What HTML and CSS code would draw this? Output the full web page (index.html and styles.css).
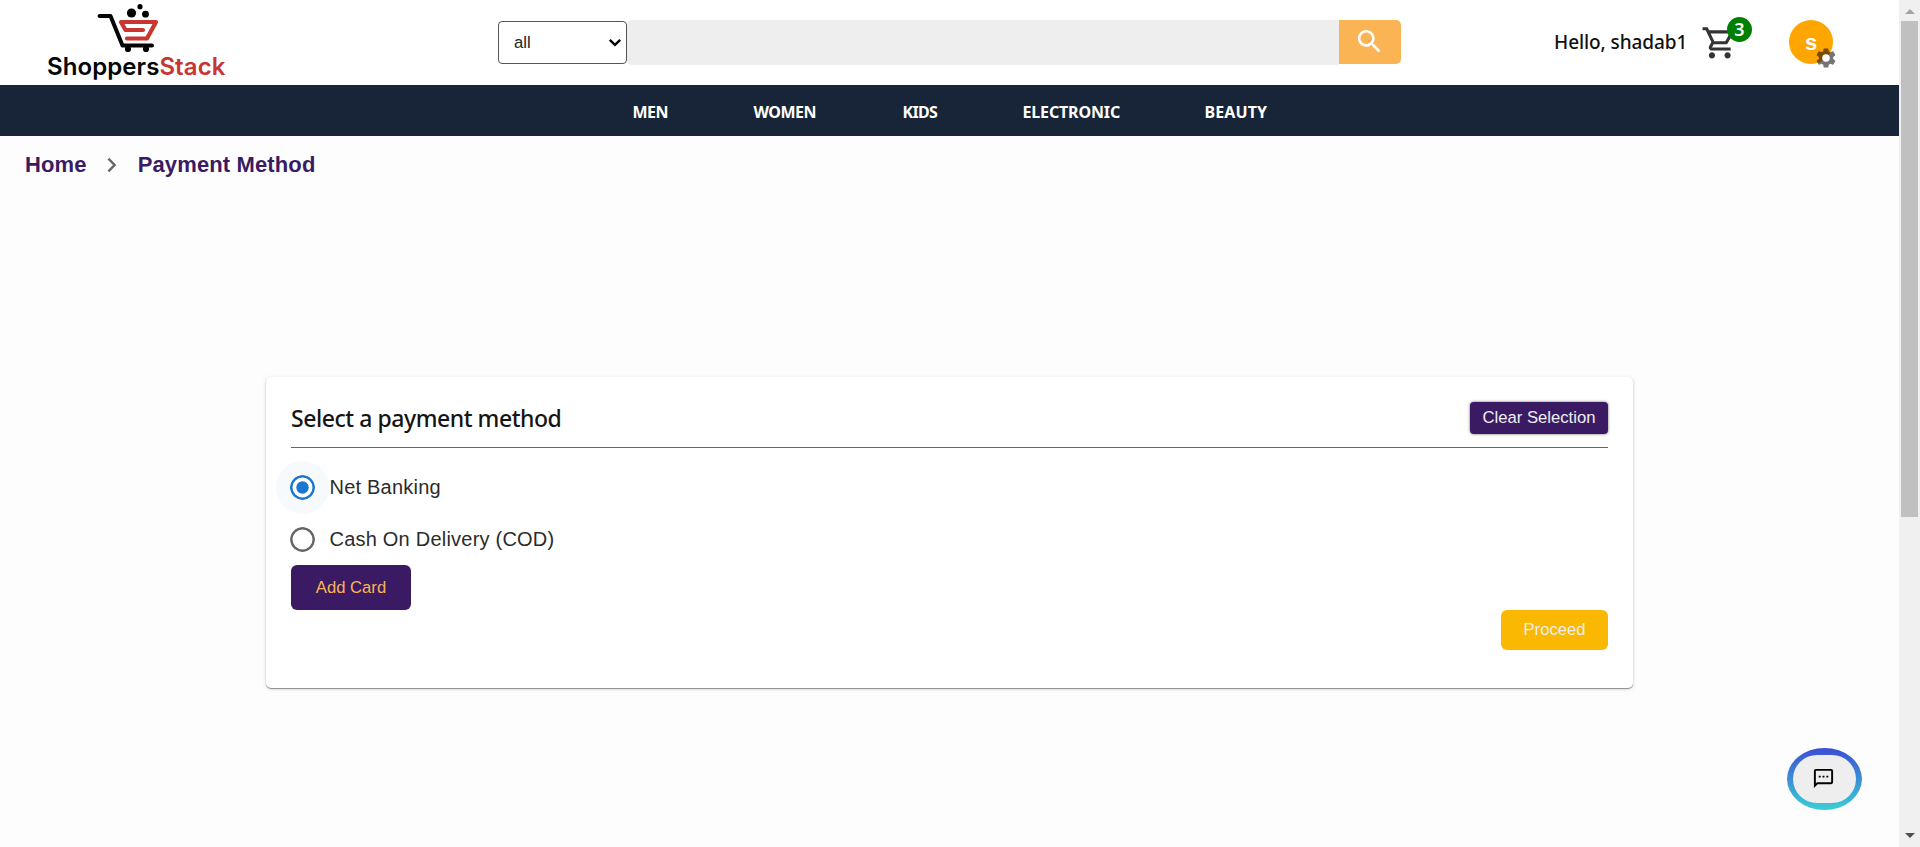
FILE: index.html
```html
<!DOCTYPE html>
<html lang="en">
<head>
<meta charset="utf-8">
<title>ShoppersStack</title>
<link rel="stylesheet" href="styles.css">
</head>
<body>
<div class="window">
  <div class="page">
    <header class="header">
      <div class="logo">
        <svg class="logo-mark" width="62" height="50" viewBox="0 0 62 50">
          <g fill="none" stroke-linecap="round" stroke-linejoin="round">
            <path d="M2.5 12H13.5L25.5 41.5H55" stroke="#050505" stroke-width="4"/>
            <path d="M46 26H28.5L24 18H59L50 34.500H30" stroke="#c83632" stroke-width="4.200"/>
          </g>
          <circle cx="34.500" cy="9" r="4.6"/><circle cx="43" cy="2.7" r="2.6"/><circle cx="48.500" cy="10.2" r="3.4"/>
          <circle cx="31" cy="45" r="3.1"/><circle cx="49" cy="45" r="3.1"/>
        </svg>
        <div class="logo-name">Shoppers<span class="logo-accent">Stack</span></div>
      </div>
      <div class="search">
        <div class="category">all
          <svg width="14" height="9" viewBox="0 0 14 9"><path d="M1.8 1.8L7 6.8L12.2 1.8" fill="none" stroke="#000" stroke-width="2.4"/></svg>
        </div>
        <div class="field"></div>
        <div class="search-button">
          <svg width="31" height="31" viewBox="0 0 24 24" fill="#fff"><path d="M15.5 14h-.79l-.28-.27C15.41 12.59 16 11.11 16 9.5 16 5.91 13.09 3 9.5 3S3 5.91 3 9.5 5.91 16 9.5 16c1.61 0 3.09-.59 4.23-1.57l.27.28v.79l5 4.99L20.49 19l-4.99-5zm-6 0C7.01 14 5 11.99 5 9.5S7.01 5 9.5 5 14 7.01 14 9.5 11.99 14 9.5 14z"/></svg>
        </div>
      </div>
      <div class="greeting">Hello, shadab1</div>
      <div class="cart">
        <svg width="37.5" height="37.5" viewBox="0 0 24 24" fill="#333"><path d="M15.55 13c.75 0 1.41-.41 1.75-1.03l3.58-6.49c.37-.66-.11-1.48-.87-1.48H5.21l-.94-2H1v2h2l3.6 7.59-1.35 2.44C4.52 15.37 5.48 17 7 17h12v-2H7l1.1-2h7.45zM6.16 6h12.15l-2.76 5H8.53L6.16 6zM7 18c-1.1 0-1.99.9-1.99 2S5.9 22 7 22s2-.9 2-2-.9-2-2-2zm10 0c-1.1 0-1.99.9-1.99 2s.89 2 1.99 2 2-.9 2-2-.9-2-2-2z"/></svg>
        <span class="badge">3</span>
      </div>
      <div class="avatar">s
        <svg class="gear" width="24" height="24" viewBox="0 0 24 24"><path d="M19.14 12.94c.04-.3.06-.61.06-.94 0-.32-.02-.64-.07-.94l2.03-1.58c.18-.14.23-.41.12-.61l-1.92-3.32c-.12-.22-.37-.29-.59-.22l-2.39.96c-.5-.38-1.03-.7-1.62-.94l-.36-2.54c-.04-.24-.24-.41-.48-.41h-3.84c-.24 0-.43.17-.47.41l-.36 2.54c-.59.24-1.13.57-1.62.94l-2.39-.96c-.22-.08-.47 0-.59.22L2.74 8.87c-.12.21-.08.47.12.61l2.03 1.58c-.05.3-.09.63-.09.94s.02.64.07.94l-2.03 1.58c-.18.14-.23.41-.12.61l1.92 3.32c.12.22.37.29.59.22l2.39-.96c.5.38 1.03.7 1.62.94l.36 2.54c.05.24.24.41.48.41h3.84c.24 0 .44-.17.47-.41l.36-2.54c.59-.24 1.13-.56 1.62-.94l2.39.96c.22.08.47 0 .59-.22l1.92-3.32c.12-.22.07-.47-.12-.61l-2.01-1.58z"/><circle class="gear-hole" cx="12" cy="12" r="3.8"/></svg>
      </div>
    </header>
    <nav class="nav"><span class="n-men">MEN</span><span class="n-women">WOMEN</span><span class="n-kids">KIDS</span><span class="n-electronic">ELECTRONIC</span><span class="n-beauty">BEAUTY</span></nav>
    <div class="crumbs">
      <span>Home</span>
      <svg width="10" height="16" viewBox="0 0 10 16"><path d="M1.4 1.6L7.6 8L1.4 14.4" fill="none" stroke="#666" stroke-width="2.4"/></svg>
      <span>Payment Method</span>
    </div>
    <main class="card">
      <div class="card-head">
        <h1 class="title">Select a payment method</h1>
        <button class="clear">Clear Selection</button>
      </div>
      <div class="option">
        <svg class="radio radio-on" width="25" height="25" viewBox="0 0 25 25"><circle class="ring" cx="12.5" cy="12.5" r="11.25"/><circle class="dot" cx="12.5" cy="12.5" r="6.2"/></svg>
        Net Banking
      </div>
      <div class="option">
        <svg class="radio" width="25" height="25" viewBox="0 0 25 25"><circle class="ring" cx="12.5" cy="12.5" r="11.25"/></svg>
        Cash On Delivery (COD)
      </div>
      <button class="add">Add Card</button>
      <button class="proceed">Proceed</button>
    </main>
    <div class="chat">
      <div class="chat-face">
        <svg width="23" height="23" viewBox="0 0 24 24"><path fill-rule="evenodd" d="M20 2H4c-1.1 0-1.99.9-1.99 2L2 22l4-4h14c1.1 0 2-.9 2-2V4c0-1.1-.9-2-2-2zm0 14H5.2L4 17.2V4h16v12zM7 9h2v2H7zm4 0h2v2h-2zm4 0h2v2h-2z"/></svg>
      </div>
    </div>
  </div>
  <div class="scrollbar">
    <span class="arrow-up"></span>
    <span class="thumb"></span>
    <span class="arrow-down"></span>
  </div>
</div>
</body>
</html>
```
FILE: styles.css
```css
* { box-sizing: border-box; }
body { margin: 0; font-family: "Liberation Sans", Arial, sans-serif; }
svg { display: block; flex: none; }
.window { display: flex; width: 1920px; height: 847px; overflow: hidden; }
.page { position: relative; width: 1899px; height: 847px; background: #fdfdfd; }

.header { display: flex; height: 85px; background: #fff; }
.logo { width: 180px; margin-left: 47px; }
.logo-mark { margin: 4px 0 0 49.5px; }
.logo-name { width: max-content; font: 600 24px/28px Inter, sans-serif; margin-top: -1px; letter-spacing: 0.08px; color: #050505; }
.logo-accent { color: #c83632; }
.search { display: flex; margin: 20px 0 0 271px; height: 45px; }
.category { display: flex; align-items: center; justify-content: space-between; width: 129px; height: 43px; margin-top: 1px; padding: 0 4px 0 15px; border: 1px solid #555; border-radius: 4px; font-size: 16.67px; color: #222; }
.field { width: 712px; background: #eee; border-radius: 5px 0 0 5px; }
.search-button { width: 62px; height: 44px; padding: 6px 0 0 15px; background: #fbb454; border-radius: 0 5px 5px 0; }
.greeting { width: 147px; margin-left: 153px; padding-top: 28px; font: 500 19px/28px "Noto Sans", sans-serif; letter-spacing: -0.08px; color: #111; white-space: nowrap; }
.cart { position: relative; width: 50px; margin-top: 24px; }
.badge { position: absolute; left: 26px; top: -7px; width: 25px; height: 25px; border-radius: 50%; background: #008000; color: #fff; font: 600 18px/24px "Noto Sans", sans-serif; text-align: center; }
.avatar { position: relative; width: 44px; height: 44px; margin: 20px 0 0 38px; border-radius: 50%; background: #ffa500; color: #fff; font: bold 22px/46px "Liberation Sans", sans-serif; text-align: center; }
.gear { position: absolute; left: 25px; top: 26px; fill: rgba(0, 0, 0, .54); }
.gear-hole { fill: #fff; }

.nav { display: grid; grid-template-columns: 121px 149px 120px 182px auto; height: 51px; padding-left: 632.5px; background: #182437; color: #fff; font: 700 16px/54px "Noto Sans", sans-serif; letter-spacing: -.5px; }
.n-kids { letter-spacing: -.7px; }
.n-electronic { letter-spacing: -.15px; }
.n-beauty { letter-spacing: .1px; }

.crumbs { display: flex; align-items: center; gap: 20.5px; height: 58px; padding-left: 25px; font-size: 22px; font-weight: bold; color: #3a1b63; letter-spacing: .13px; }

.card { width: 1367px; height: 311px; margin: 183px 0 0 266px; padding: 25px; background: #fff; border-radius: 5px; box-shadow: 0 1px 1px rgba(0,0,0,.4), 0 1px 4px rgba(0,0,0,.14); }
.card-head { display: flex; justify-content: space-between; align-items: flex-start; height: 46px; border-bottom: 1px solid #666; }
.title { margin: 0; font: 500 23px/32px "Noto Sans", sans-serif; letter-spacing: -0.45px; color: #151515; white-space: nowrap; }
button { border: 0; padding: 0; font: 16.67px "Liberation Sans", sans-serif; }
.clear { width: 138px; height: 32px; padding-bottom: 1px; border-radius: 4px; background: #3a1b63; color: #eee; box-shadow: 0 0 3px rgba(0,0,0,.6); }
.option { display: flex; align-items: center; gap: 14.5px; height: 52px; margin-left: -1px; font-size: 20px; letter-spacing: .22px; color: #2b2b2b; }
.card-head + .option { margin-top: 13px; }
.radio { border-radius: 50%; }
.ring { fill: none; stroke: #666; stroke-width: 2.5; }
.radio-on { background: #f6fafd; box-shadow: 0 0 0 14px #f6fafd; }
.radio-on .ring { fill: #fff; stroke: #1976d2; }
.dot { fill: #1976d2; }
.add { display: block; width: 120px; height: 45px; border-radius: 6px; background: #3a1b63; color: #fbb454; }
.proceed { display: block; width: 107px; height: 40px; margin-left: auto; border-radius: 6px; background: #fbb802; color: #eee; }

.chat { position: absolute; left: 1787px; top: 748px; width: 75px; height: 62px; padding: 7px 6px; border-radius: 50%; background: linear-gradient(#3b4fd4, #3bced4); }
.chat-face { display: flex; align-items: center; justify-content: center; width: 63px; height: 48px; padding: 0 2px 2px 0; border-radius: 24px; background: #eee; }

.scrollbar { display: flex; flex-direction: column; align-items: center; width: 21px; background: #f0f0f0; }
.arrow-up { margin-top: 9px; border: 5px solid transparent; border-top: 0; border-bottom-color: #a3a3a3; }
.thumb { width: 17px; height: 496px; margin-top: 7px; background: #c0c0c0; }
.arrow-down { margin: auto 0 9px; border: 5px solid transparent; border-bottom: 0; border-top-color: #505050; }
```
